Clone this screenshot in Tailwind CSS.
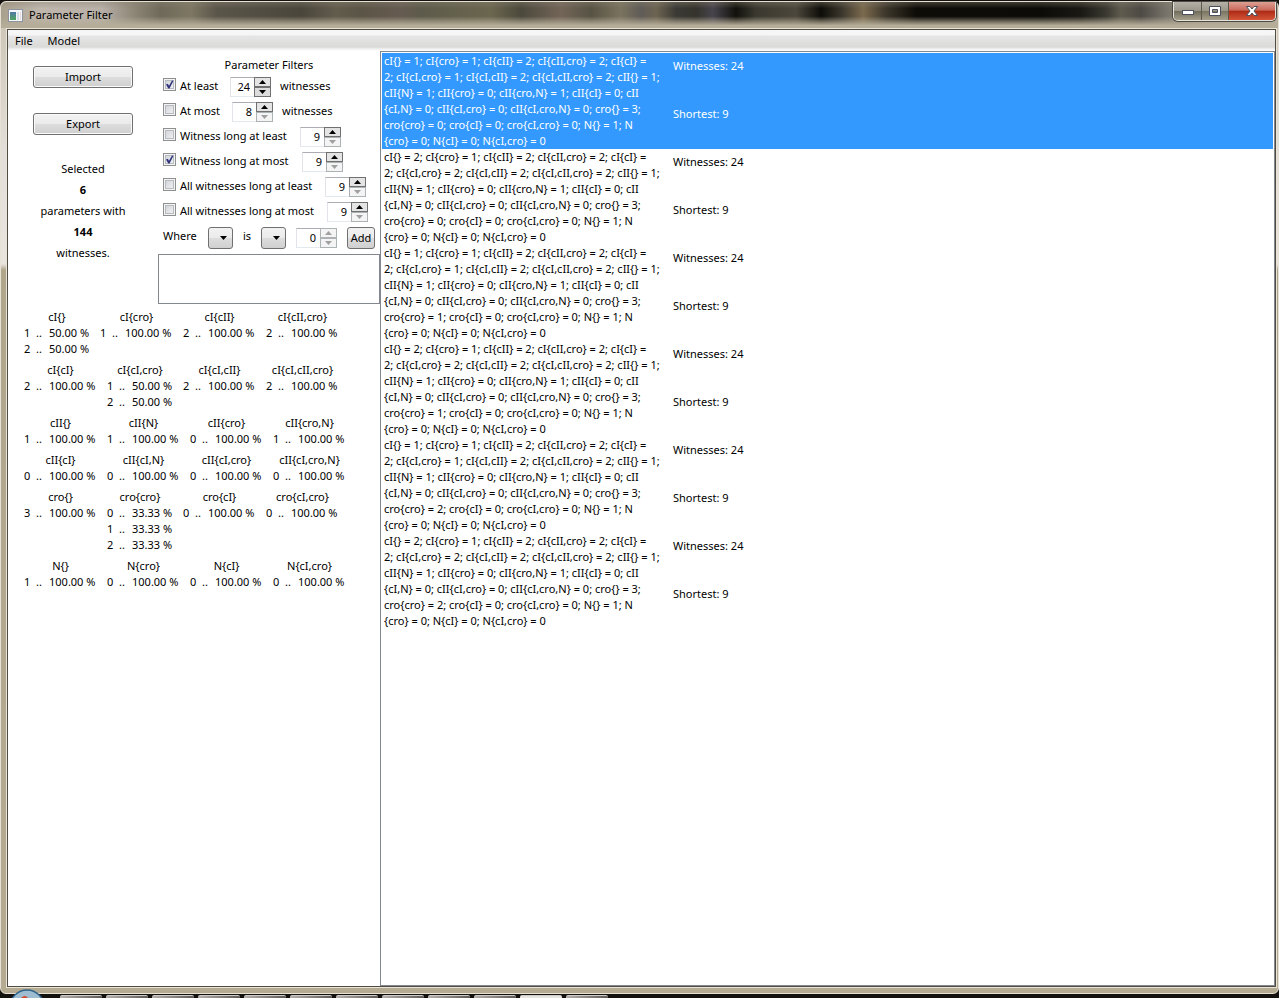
<!DOCTYPE html>
<html lang="en">
<head>
<meta charset="utf-8">
<title>Parameter Filter</title>
<script src="https://cdn.jsdelivr.net/npm/@tailwindcss/browser@4"></script>
</head>
<body class="relative flex h-screen flex-col overflow-hidden bg-[#15120f] pt-px font-['Noto_Sans',sans-serif] text-[11px] leading-4 text-black">

<div class="flex min-h-0 flex-1 flex-col rounded-t-md rounded-b-md border border-[#e6e1d4] bg-[linear-gradient(to_bottom,#c9c2b2_0px,#e4deda_150px,#e9e4de_262px,#b0a68c_268px,#b5ab93_100%)]">
  <header class="relative flex h-[26px] shrink-0 items-center rounded-t-md bg-[linear-gradient(to_bottom,#8a847466_0%,transparent_25%,transparent_55%,#b5ad98_90%),linear-gradient(to_right,#a89f8d_0px,#bfb6ad_40px,#b9b0a8_100px,#8b8474_135px,#6f695a_160px,#7d7763_190px,#5b564a_215px,#4a463b_300px,#625c4d_335px,#5b5547_360px,#665b50_400px,#5d5b4b_420px,#6b664e_490px,#4b493c_520px,#736558_560px,#575344_590px,#7a735e_620px,#5f5b57_640px,#6d6451_655px,#3b3a35_675px,#35332c_695px,#48444c_712px,#12110c_735px,#3a382f_755px,#4c473c_795px,#0e0d08_820px,#39352c_840px,#7b6a4e_862px,#3c362b_885px,#0e0c07_915px,#0c0b07_1040px,#1b1914_1080px,#3a3831_1105px,#5f5b4e_1120px,#4d4a45_1140px,#77736a_1165px,#9d9686_1200px,#b7b09f_100%)]">
    <svg class="ml-[7px] h-[13px] w-[15px]" viewBox="0 0 15 13" aria-hidden="true">
      <defs><linearGradient id="pane" x1="0" y1="0" x2="0" y2="1"><stop offset="0" stop-color="#5179a8"/><stop offset="1" stop-color="#4fa45c"/></linearGradient></defs>
      <rect x=".5" y=".5" width="14" height="12" fill="#f4f6f8" stroke="#8c959f"/>
      <rect x="2" y="3" width="6" height="8" fill="url(#pane)"/>
      <rect x="9" y="3" width="2" height="8" fill="#d5dfe5"/><rect x="12" y="3" width="1" height="8" fill="#e8d9da"/>
    </svg>
    <h1 class="ml-[6px] text-[11px] font-normal">Parameter Filter</h1>
    <div class="ml-auto mr-[2px] flex h-[19px] self-start overflow-hidden rounded-b-[5px] border border-t-0 border-[#e4e1da] shadow-[0_0_0_1px_#4d4a44]">
      <button aria-label="Minimize" class="flex w-[28px] items-center justify-center border-r border-[#5c594f] bg-[linear-gradient(to_bottom,#b4b1a9_0%,#9b9789_48%,#6e6a5b_50%,#a6a08b_100%)]">
        <svg class="h-[12px] w-[14px]" viewBox="0 0 14 12"><rect x="1.500" y="5.500" width="11" height="4" fill="#fff" stroke="#4c4f5c"/></svg>
      </button>
      <button aria-label="Maximize" class="flex w-[27px] items-center justify-center border-r border-[#5c594f] bg-[linear-gradient(to_bottom,#b4b1a9_0%,#9b9789_48%,#78735f_50%,#a6a08b_100%)]">
        <svg class="h-[12px] w-[14px]" viewBox="0 0 14 12"><path fill="#fff" stroke="#4c4f5c" fill-rule="evenodd" d="M1.500 1.500h11v9h-11zM4.500 4.500h5v3h-5z"/></svg>
      </button>
      <button aria-label="Close" class="flex w-[46px] items-center justify-center bg-[linear-gradient(to_bottom,#dda093_0%,#c8685a_46%,#ad2a13_50%,#d4553a_100%)]">
        <svg class="h-[12px] w-[14px]" viewBox="0 0 14 12"><path fill="#fff" stroke="#4c4f5c" d="M1.500 1.500h3.500l2 2.500 2-2.500h3.500L9 6l3.500 4.500H9L7 8l-2 2.500H1.500L5 6z"/></svg>
      </button>
    </div>
  </header>

  <div class="mr-px mb-[5px] ml-[5px] flex min-h-0 flex-1 flex-col border border-[#e8e4d6]">
    <div class="flex min-h-0 flex-1 flex-col border border-[#504c45] bg-white">
      <nav class="flex h-[21px] shrink-0 items-center bg-[linear-gradient(to_bottom,#f6f7f6_0px,#f4f5f4_5px,#e7e6e6_6px,#dadad8_17px,#f3f1f3_19px,#ffffff_21px)] pl-[7px]">
        <button class="mr-[15px]">File</button>
        <button>Model</button>
      </nav>

      <main class="flex min-h-0 flex-1">
        <section class="w-[372px] shrink-0">
          <div class="flex">
            <div class="flex w-[150px] flex-col items-center pt-[15px]">
              <button class="h-[22px] w-[100px] rounded-[3px] border border-[#707070] bg-[linear-gradient(to_bottom,#f2f2f2_0%,#ebebeb_48%,#dddddd_52%,#cfcfcf_100%)] shadow-[inset_0_0_0_1px_#fafafa]">Import</button>
              <button class="mt-[25px] h-[22px] w-[100px] rounded-[3px] border border-[#707070] bg-[linear-gradient(to_bottom,#f2f2f2_0%,#ebebeb_48%,#dddddd_52%,#cfcfcf_100%)] shadow-[inset_0_0_0_1px_#fafafa]">Export</button>
              <p class="mt-[23px] text-center leading-[21px]">Selected<br><b>6</b><br>parameters with<br><b>144</b><br>witnesses.</p>
            </div>
            <div class="w-[222px]">
              <h2 class="pt-[6px] text-center text-[11px] font-normal">Parameter Filters</h2>
              <div id="filters" class="pt-px"></div>
              <div class="flex h-[27px] items-center pl-[5px]">
                <span class="w-[45px] pb-[3px]">Where</span>
                <span class="relative flex">
                  <select aria-label="Parameter" class="h-[22px] w-[25px] appearance-none rounded-[3px] border border-[#707070] bg-[linear-gradient(to_bottom,#f2f2f2_0%,#ebebeb_48%,#dddddd_52%,#cfcfcf_100%)]"></select>
                  <svg class="pointer-events-none absolute top-[9px] left-[12px] h-[4px] w-[7px]" viewBox="0 0 7 4"><path d="M0 0h7L3.500 4z"/></svg>
                </span>
                <span class="ml-[10px] w-[18px] pb-[3px]">is</span>
                <span class="relative flex">
                  <select aria-label="Comparison" class="h-[22px] w-[25px] appearance-none rounded-[3px] border border-[#707070] bg-[linear-gradient(to_bottom,#f2f2f2_0%,#ebebeb_48%,#dddddd_52%,#cfcfcf_100%)]"></select>
                  <svg class="pointer-events-none absolute top-[9px] left-[12px] h-[4px] w-[7px]" viewBox="0 0 7 4"><path d="M0 0h7L3.500 4z"/></svg>
                </span>
                <span id="whereValue" class="ml-[10px] flex"></span>
                <button class="ml-[10px] h-[22px] w-[28px] rounded-[3px] border border-[#707070] bg-[linear-gradient(to_bottom,#f2f2f2_0%,#ebebeb_48%,#dddddd_52%,#cfcfcf_100%)]">Add</button>
              </div>
              <div role="listbox" aria-label="Conditions" class="mt-[3px] h-[50px] border border-[#828790]"></div>
            </div>
          </div>
          <div id="stats" class="mt-[5px] flex flex-col gap-[5px] pl-4"></div>
        </section>

        <section id="list" role="listbox" aria-label="Parametrizations" class="min-w-0 flex-1 border border-[#828790] p-px"></section>
      </main>
    </div>
  </div>
</div>

<footer class="flex h-[4px] shrink-0 items-end gap-[4px] bg-[#12110d] pl-[60px]" id="taskbar"></footer>
<svg class="absolute bottom-0 left-[10px] h-[9px] w-[34px]" viewBox="0 0 34 9" aria-hidden="true">
  <circle cx="17" cy="18" r="17" fill="#9fbdd0" stroke="#31648c" stroke-width="1.500"/>
  <path d="M11 9q4-4 7 0z" fill="#d2492d"/>
</svg>

<script>
  const spinner = (value, upOff, downOff, label) => `
    <span class="flex h-[20px]">
      <input aria-label="${label}" value="${value}" class="w-[24px] border-t border-l border-t-[#abadb3] border-l-[#e2e3ea] border-b border-b-[#e3e9ef] pt-px pr-[4px] text-right">
      <span class="flex w-[17px] flex-col">
        <button aria-label="Increase" class="flex h-[10px] items-center justify-center border ${upOff ? 'border-[#adb2b5] bg-[#f4f4f4]' : 'border-[#707070] bg-[#e4e4e4]'}"><svg class="h-[4px] w-[7px]" viewBox="0 0 7 4"><path fill="${upOff ? '#a0a0a0' : '#000'}" d="M0 4h7L3.500 0z"/></svg></button>
        <button aria-label="Decrease" class="flex h-[10px] items-center justify-center border ${downOff ? 'border-[#adb2b5] bg-[#f4f4f4]' : 'border-[#707070] bg-[#dcdcdc]'}"><svg class="h-[4px] w-[7px]" viewBox="0 0 7 4"><path fill="${downOff ? '#a0a0a0' : '#000'}" d="M0 0h7L3.500 4z"/></svg></button>
      </span>
    </span>`;

  const filters = [
    ['At least', 'w-[67px]', 24, true, false, 'witnesses'],
    ['At most', 'w-[69px]', 8, false, true, 'witnesses'],
    ['Witness long at least', 'w-[137px]', 9, false, true, ''],
    ['Witness long at most', 'w-[139px]', 9, true, true, ''],
    ['All witnesses long at least', 'w-[162px]', 9, false, true, ''],
    ['All witnesses long at most', 'w-[164px]', 9, false, true, ''],
  ];
  document.getElementById('filters').innerHTML = filters.map(([text, width, value, on, downOff, after]) => `
    <div class="flex h-[25px] items-center pl-[5px]">
      <label class="flex items-center whitespace-nowrap pb-px ${width}">
        <span class="relative mr-[4px] flex pb-[3px]">
          <input type="checkbox" ${on ? 'checked' : ''} class="peer h-[13px] w-[13px] appearance-none border border-[#8e8f8f] bg-[linear-gradient(135deg,#cbcfd5,#f6f6f6)] shadow-[inset_0_0_0_1px_#f4f4f4,inset_0_0_0_2px_#b6bbc2]">
          <svg class="pointer-events-none absolute top-0 left-0 hidden h-[13px] w-[13px] peer-checked:block" viewBox="0 0 13 13"><path d="M3 6.500l1.800-.8 1.200 2L9 2.500l1.500.2-4 7.800H5.300z" fill="#31347c"/></svg>
        </span>${text}
      </label>
      ${spinner(value, false, downOff, text)}
      <span class="ml-[9px] pb-px">${after}</span>
    </div>`).join('');
  document.getElementById('whereValue').innerHTML = spinner(0, true, true, 'Value');

  const H = '100.00', F = '50.00', T = '33.33';
  const stats = [
    [['cI{}', [1, F], [2, F]], ['cI{cro}', [1, H]], ['cI{cII}', [2, H]], ['cI{cII,cro}', [2, H]]],
    [['cI{cI}', [2, H]], ['cI{cI,cro}', [1, F], [2, F]], ['cI{cI,cII}', [2, H]], ['cI{cI,cII,cro}', [2, H]]],
    [['cII{}', [1, H]], ['cII{N}', [1, H]], ['cII{cro}', [0, H]], ['cII{cro,N}', [1, H]]],
    [['cII{cI}', [0, H]], ['cII{cI,N}', [0, H]], ['cII{cI,cro}', [0, H]], ['cII{cI,cro,N}', [0, H]]],
    [['cro{}', [3, H]], ['cro{cro}', [0, T], [1, T], [2, T]], ['cro{cI}', [0, H]], ['cro{cI,cro}', [0, H]]],
    [['N{}', [1, H]], ['N{cro}', [0, H]], ['N{cI}', [0, H]], ['N{cI,cro}', [0, H]]],
  ];
  document.getElementById('stats').innerHTML = stats.map(row => `<div class="flex gap-[10px]">` + row.map(([name, ...vals]) => `
    <div class="${vals[0][1] === H ? 'w-[73px]' : 'w-[66px]'} whitespace-nowrap">
      <div class="text-center">${name}</div>
      ${vals.map(([n, p]) => `<div class="flex"><span class="w-[12px]">${n}</span><span class="w-[13px]">..</span><span>${p} %</span></div>`).join('')}
    </div>`).join('') + `</div>`).join('');

  const items = [[1, 1, 0], [2, 2, 0], [1, 1, 1], [2, 2, 1], [1, 1, 2], [2, 2, 2]];
  document.getElementById('list').innerHTML = items.map(([a, b, c], i) => `
    <div role="option" aria-selected="${i === 0}" class="flex pl-[2px] ${i === 0 ? 'bg-[#3399ff] text-white' : ''}">
      <p class="w-[289px] whitespace-nowrap">cI{} = ${a}; cI{cro} = 1; cI{cII} = 2; cI{cII,cro} = 2; cI{cI} =<br>2; cI{cI,cro} = ${b}; cI{cI,cII} = 2; cI{cI,cII,cro} = 2; cII{} = 1;<br>cII{N} = 1; cII{cro} = 0; cII{cro,N} = 1; cII{cI} = 0; cII<br>{cI,N} = 0; cII{cI,cro} = 0; cII{cI,cro,N} = 0; cro{} = 3;<br>cro{cro} = ${c}; cro{cI} = 0; cro{cI,cro} = 0; N{} = 1; N<br>{cro} = 0; N{cI} = 0; N{cI,cro} = 0</p>
      <div class="grid grid-rows-2"><span class="pt-[5px]">Witnesses: 24</span><span class="pt-[5px]">Shortest: 9</span></div>
    </div>`).join('');

  document.getElementById('taskbar').innerHTML = Array.from({ length: 12 }, (_, i) =>
    `<span class="h-[3px] w-[42px] rounded-t-[2px] border-t border-[#cfccc8] ${i === 10 ? 'bg-[#e6e4e2]' : 'bg-[linear-gradient(to_right,#b5b0ad,#5d5a57)]'}"></span>`).join('');
</script>
</body>
</html>
